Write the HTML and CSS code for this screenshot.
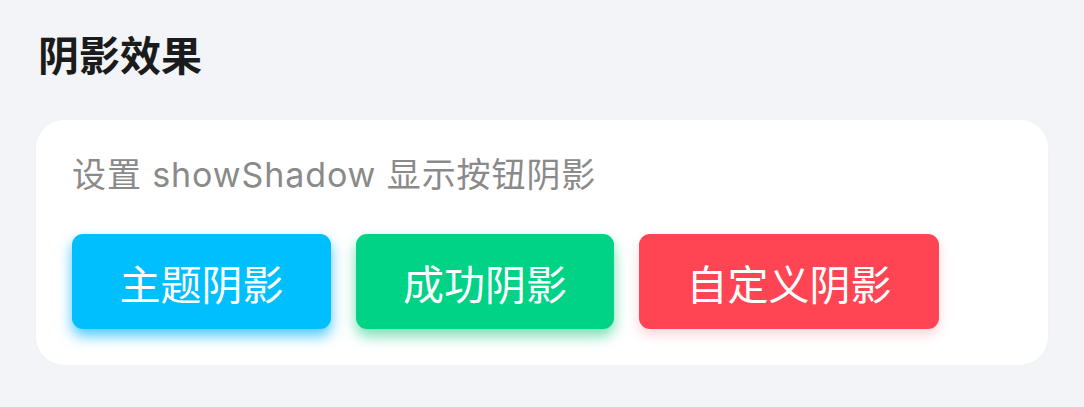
FILE: index.html
```html
<!DOCTYPE html>
<html lang="zh-CN">
<head>
    <meta charset="UTF-8">
    <meta name="viewport" content="width=device-width, initial-scale=1.0">
    <title>阴影效果</title>
    <link rel="stylesheet" href="styles.css">
</head>
<body>
    <h2 class="section-title">阴影效果</h2>

    <div class="card">
        <p class="desc">设置 showShadow 显示按钮阴影</p>
        <div class="btn-row">
            <button class="btn btn-primary">主题阴影</button>
            <button class="btn btn-success">成功阴影</button>
            <button class="btn btn-custom">自定义阴影</button>
        </div>
    </div>
</body>
</html>
```

FILE: styles.css
```css
body {
    font-family: Inter, "Noto Sans CJK SC", sans-serif;
    background-color: #f3f4f8;
    margin: 0;
    padding: 36px 36px 0;
}
.section-title {
    margin: 0 0 43px 2px;
    font-size: 41px;
    line-height: 1;
    font-weight: 700;
    color: #1b1b1b;
}
.card {
    background: #fff;
    border-radius: 28px;
    padding: 38px 36px 36px;
    box-shadow: 0 1px 4px rgba(0, 0, 0, 0.02);
}
.desc {
    margin: 0 0 42px;
    font-size: 34px;
    line-height: 1;
    letter-spacing: 0.9px;
    color: #8a8a8a;
}
.btn-row {
    display: flex;
    gap: 25px;
}
.btn {
    height: 95px;
    padding: 0;
    border: none;
    border-radius: 11px;
    font-family: inherit;
    font-size: 41px;
    color: #fff;
    cursor: pointer;
}
.btn-primary {
    width: 259px;
    background: #00bfff;
    box-shadow: 0 7px 14px rgba(0, 180, 255, 0.7);
}
.btn-success {
    width: 258px;
    background: #00d386;
    box-shadow: 0 7px 14px rgba(0, 200, 120, 0.55);
}
.btn-custom {
    width: 300px;
    background: #ff4553;
    box-shadow: 0 6px 12px rgba(255, 70, 85, 0.22);
}
```
